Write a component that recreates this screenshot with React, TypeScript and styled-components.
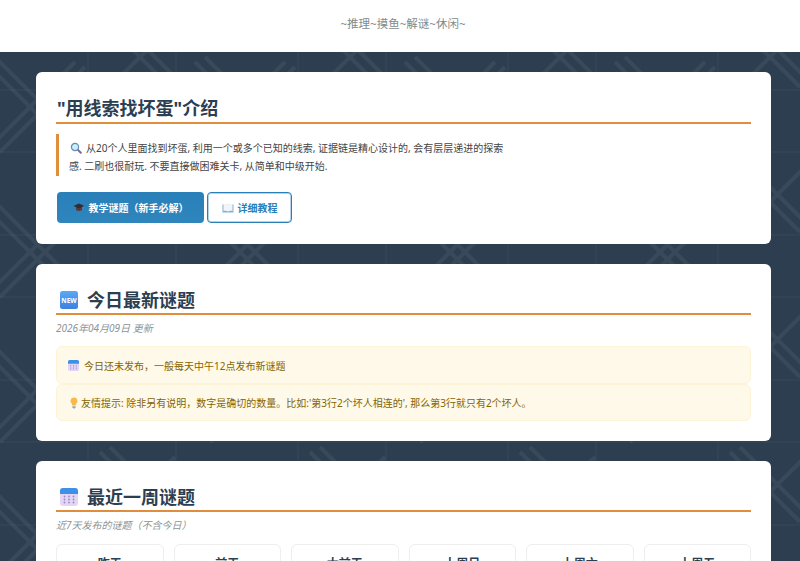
import React from 'react'
import styled, { createGlobalStyle } from 'styled-components'

const tile = `<svg xmlns='http://www.w3.org/2000/svg' width='210' height='145'><g fill='none' stroke='white'><g stroke-opacity='.055' stroke-width='4'><path d='M-15 10L50 75M-5 5L60 70M75 10L-10 95M85 15L0 100'/><path d='M100 -35L170 35M110 -40L180 30M175 -30L100 45'/><path d='M100 110L170 180M110 105L180 175M175 115L100 190'/><path d='M195 10L260 75M205 5L270 70M210 75L200 85'/></g><g stroke-opacity='.045' stroke-width='1'><path d='M0 38H210M0 100H210M88 0V145M176 0V145'/></g></g></svg>`

const GlobalStyle = createGlobalStyle`
  html, body {
    margin: 0;
    padding: 0;
    height: 100%;
    overflow: hidden;
    background: #fff;
  }
  body {
    font-family: "Noto Sans", "Noto Sans CJK SC", sans-serif;
    color: #2c3e50;
  }
`

const Header = styled.header`
  height: 52px;
  background: #fff;
  text-align: center;
  color: #7f8c8d;
  font-size: 11.52px;
  line-height: 16px;
  padding: 16px 0 0 6px;
  box-sizing: border-box;
`

const Main = styled.main`
  height: 509px;
  overflow: hidden;
  box-sizing: border-box;
  padding: 20px 29px 0 36px;
  background-color: #2c3e50;
  background-image: url("data:image/svg+xml,${encodeURIComponent(tile)}");
  display: flex;
  flex-direction: column;
  gap: 20px;
`

const Card = styled.section`
  flex: none;
  background: #fff;
  border-radius: 6px;
  padding: 20px 20px 20px;
`

const IntroCard = styled(Card)`
  padding-bottom: 21px;
`

const Title = styled.h2<{ $icon?: boolean }>`
  margin: 0;
  height: ${p => (p.$icon ? 31 : 32)}px;
  box-sizing: border-box;
  border-bottom: 2px solid #e08e3c;
  display: flex;
  align-items: center;
  gap: 9px;
  font-size: 18px;
  line-height: 28px;
  font-weight: 700;
  color: #2c3e50;
  padding: 2px 0 0 ${p => (p.$icon ? 4 : 1)}px;
`

const Intro = styled.blockquote`
  margin: 10px 0 16px;
  width: 452px;
  height: 42px;
  box-sizing: border-box;
  border-left: 3px solid #e08e3c;
  padding: 6px 0 4px 10px;
  font-size: 10px;
  line-height: 16px;
  color: #444;
`

const InlineIcon = styled.span`
  display: inline-block;
  vertical-align: -2px;
  margin: 0 4px 0 1px;
`

const Buttons = styled.div`
  display: flex;
  gap: 3px;
  padding-left: 1px;
`

const Button = styled.a<{ $primary?: boolean }>`
  height: 31px;
  box-sizing: border-box;
  display: flex;
  align-items: center;
  justify-content: center;
  gap: 4px;
  border-radius: 4px;
  font-size: 10px;
  font-weight: 700;
  width: ${p => (p.$primary ? 147 : 85)}px;
  color: ${p => (p.$primary ? '#fff' : '#2980b9')};
  background: ${p => (p.$primary ? 'linear-gradient(180deg, #2980b9, #2f86bd)' : '#fff')};
  border: ${p => (p.$primary ? 'none' : '1px solid #2980b9')};
  box-shadow: ${p => (p.$primary ? 'none' : 'inset 0 0 0 1px rgba(41, 128, 185, 0.35)')};
`

const Meta = styled.p`
  margin: 5px 0 0;
  font-size: 10px;
  line-height: 16px;
  font-style: italic;
  color: #8a9496;
`

const Notices = styled.div`
  margin-top: 10px;
  display: flex;
  flex-direction: column;
`

const Notice = styled.div<{ $gap: number }>`
  height: 38px;
  box-sizing: border-box;
  display: flex;
  align-items: center;
  gap: ${p => p.$gap}px;
  padding: 0 11px;
  background: #fef9e8;
  border: 1px solid #fdf3d7;
  border-radius: 6px;
  font-size: 10px;
  color: #856404;

  &:last-child {
    height: 37px;
  }
`

const Week = styled.div`
  display: grid;
  grid-template-columns: repeat(6, 1fr);
  gap: 10px;
  margin-top: 11px;
`

const Day = styled.div`
  height: 70px;
  box-sizing: border-box;
  border: 1px solid #eee;
  border-radius: 6px;
  padding-top: 12px;
  text-align: center;
  font-size: 12px;
  line-height: 14px;
  font-weight: 700;
  color: #2c3e50;
`

const Search = () => (
  <svg width="12" height="12" viewBox="0 0 12 12">
    <path d="M7.4 7.4l3.4 3.4" stroke="#8e5ea2" strokeWidth="2" strokeLinecap="round" />
    <circle cx="5" cy="5" r="3.6" fill="#cfeafa" stroke="#5d8fb0" strokeWidth="1.2" />
  </svg>
)

const Cap = () => (
  <svg width="12" height="11" viewBox="0 0 12 11">
    <path d="M3 5v3c1.5 1.4 4.5 1.4 6 0V5z" fill="#5a3a3f" />
    <path d="M0.5 4L6 1.5 11.5 4 6 6.5z" fill="#2d2d33" />
    <path d="M10.3 4.5v3" stroke="#d9534f" strokeWidth="1" />
  </svg>
)

const Book = () => (
  <svg width="12" height="10" viewBox="0 0 12 10">
    <path d="M0.5 1.5h11v8h-11z" fill="#7fb3d5" />
    <path d="M1.5 1c1.6-.4 3.4-.2 4.5.5 1.1-.7 2.9-.9 4.5-.5v7c-1.6-.3-3.4-.1-4.5.5-1.1-.6-2.9-.8-4.5-.5z" fill="#f1f5f8" />
  </svg>
)

const NewBadge = () => (
  <svg width="18" height="18" viewBox="0 0 18 18">
    <defs>
      <linearGradient id="newFill" x1="0" y1="0" x2="0" y2="1">
        <stop offset="0" stopColor="#5aa9f5" />
        <stop offset="1" stopColor="#3f7fe0" />
      </linearGradient>
    </defs>
    <rect width="18" height="18" rx="2.5" fill="url(#newFill)" />
    <text x="9" y="11.5" textAnchor="middle" fontSize="6.6" fontWeight="700" fill="#fff" fontFamily="Noto Sans">NEW</text>
  </svg>
)

const Calendar = ({ size }: { size: number }) => (
  <svg width={size} height={size} viewBox="0 0 18 18">
    <rect width="18" height="18" rx="3" fill="#e3d6f5" />
    <path d="M0 6V3a3 3 0 0 1 3-3h12a3 3 0 0 1 3 3v3z" fill="#3d8fe8" />
    <g fill="#9a86c9">
      {[4.5, 9, 13.5].map(x =>
        [8.5, 11.5, 14.5].map(y => <circle key={`${x}-${y}`} cx={x} cy={y} r="0.9" />),
      )}
    </g>
  </svg>
)

const Bulb = () => (
  <svg width="12" height="12" viewBox="0 0 12 12">
    <path d="M6 0.5a3.5 3.5 0 0 1 2 6.4V8.5H4V6.9A3.5 3.5 0 0 1 6 0.5z" fill="#f9b949" />
    <path d="M4.4 9.2h3.2v1.6L6.6 11.6H5.4L4.4 10.8z" fill="#9aa5b1" />
  </svg>
)

const days = ['昨天', '前天', '大前天', '上周日', '上周六', '上周五']

export default function App() {
  return (
    <>
      <GlobalStyle />
      <Header>~推理~摸鱼~解谜~休闲~</Header>
      <Main>
        <IntroCard>
          <Title>"用线索找坏蛋"介绍</Title>
          <Intro>
            <InlineIcon>
              <Search />
            </InlineIcon>
            从20个人里面找到坏蛋, 利用一个或多个已知的线索, 证据链是精心设计的, 会有层层递进的探索感. 二刷也很耐玩. 不要直接做困难关卡, 从简单和中级开始.
          </Intro>
          <Buttons>
            <Button $primary>
              <Cap />
              教学谜题（新手必解）
            </Button>
            <Button>
              <Book />
              详细教程
            </Button>
          </Buttons>
        </IntroCard>
        <Card>
          <Title $icon>
            <NewBadge />
            今日最新谜题
          </Title>
          <Meta>2026年04月09日 更新</Meta>
          <Notices>
            <Notice $gap={5}>
              <Calendar size={11} />
              今日还未发布，一般每天中午12点发布新谜题
            </Notice>
            <Notice $gap={1}>
              <Bulb />
              友情提示: 除非另有说明，数字是确切的数量。比如:'第3行2个坏人相连的', 那么第3行就只有2个坏人。
            </Notice>
          </Notices>
        </Card>
        <Card>
          <Title $icon>
            <Calendar size={18} />
            最近一周谜题
          </Title>
          <Meta>近7天发布的谜题（不含今日）</Meta>
          <Week>
            {days.map(d => (
              <Day key={d}>{d}</Day>
            ))}
          </Week>
        </Card>
      </Main>
    </>
  )
}
